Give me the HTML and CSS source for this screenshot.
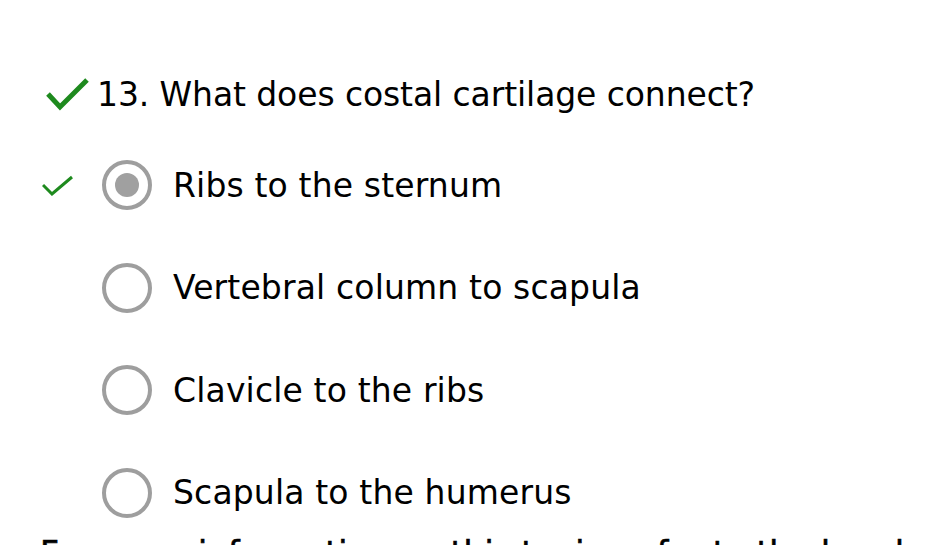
FILE: index.html
```html
<!DOCTYPE html>
<html>
<head>
<meta charset="utf-8">
<link rel="stylesheet" href="styles.css">
</head>
<body>
<div class="page">
  <div class="question">
    <svg class="qcheck" width="44" height="34" viewBox="0 0 44 34"><path d="M3 17 L15 30 L42 3" fill="none" stroke="#1e8a1e" stroke-width="5"/></svg>
    <span class="qtext">13. What does costal cartilage connect?</span>
  </div>
  <ul class="options">
    <li class="option">
      <span class="mark"><svg width="31" height="21" viewBox="0 0 31 21"><path d="M1 10 L10 19 L30 2" fill="none" stroke="#1e8a1e" stroke-width="3"/></svg></span>
      <span class="radio checked"></span>
      <span class="label">Ribs to the sternum</span>
    </li>
    <li class="option">
      <span class="mark"></span>
      <span class="radio"></span>
      <span class="label">Vertebral column to scapula</span>
    </li>
    <li class="option">
      <span class="mark"></span>
      <span class="radio"></span>
      <span class="label">Clavicle to the ribs</span>
    </li>
    <li class="option">
      <span class="mark"></span>
      <span class="radio"></span>
      <span class="label">Scapula to the humerus</span>
    </li>
  </ul>
  <p class="more">For more information on this topic, refer to the handout.</p>
</div>
</body>
</html>
```
FILE: styles.css
```css
html, body {
  margin: 0;
  padding: 0;
  background: #fff;
  overflow: hidden;
}
.page {
  font-family: "DejaVu Sans", Verdana, sans-serif;
  color: #000;
  width: 927px;
  height: 545px;
  overflow: hidden;
  padding-top: 72px;
  box-sizing: border-box;
}
.question {
  display: flex;
  align-items: center;
  padding-left: 45px;
  height: 44px;
}
.qcheck {
  display: block;
  margin-right: 8px;
}
.qtext {
  font-size: 33px;
  letter-spacing: -0.1px;
  white-space: nowrap;
}
.options {
  list-style: none;
  margin: 0;
  padding: 0;
  margin-top: 44px;
}
.option {
  display: flex;
  align-items: center;
  height: 50px;
  margin-bottom: 52.5px;
}
.mark {
  width: 31px;
  height: 21px;
  margin-left: 42px;
  margin-right: 29px;
  display: flex;
}
.radio {
  width: 50px;
  height: 50px;
  border: 4px solid #9e9e9e;
  border-radius: 50%;
  box-sizing: border-box;
  display: flex;
  align-items: center;
  justify-content: center;
  margin-right: 21px;
}
.radio.checked::after {
  content: "";
  width: 24px;
  height: 24px;
  border-radius: 50%;
  background: #a0a0a0;
}
.label {
  font-size: 33px;
  letter-spacing: 0.15px;
  white-space: nowrap;
}
.more {
  margin: 0;
  margin-top: -36px;
  padding-left: 40px;
  font-size: 33px;
  font-weight: normal;
  -webkit-text-stroke: 0.6px #000;
  white-space: nowrap;
}
```
